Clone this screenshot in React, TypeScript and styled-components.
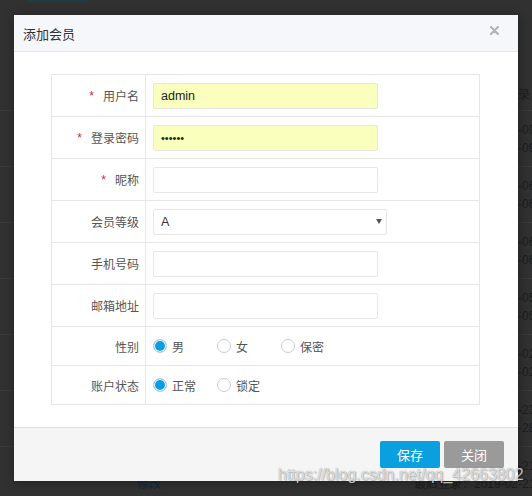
import React from "react";
import styled, { createGlobalStyle } from "styled-components";

const GlobalStyle = createGlobalStyle`
  html, body {
    margin: 0;
    padding: 0;
  }
  body {
    font-family: "Liberation Sans", "Noto Sans CJK SC", sans-serif;
  }
`;

const Screen = styled.div`
  position: relative;
  width: 532px;
  height: 496px;
  overflow: hidden;
  background: #313131;
`;

/* page behind the mask */
const NavMark = styled.div`
  width: 59px;
  height: 2px;
  margin-left: 28px;
  background: #1b3d43;
`;

const BgTable = styled.div`
  margin-top: 78px;
  font-size: 12px;
  color: #1d1d1d;
  white-space: nowrap;
`;

const BgRow = styled.div<{ $head?: boolean }>`
  display: grid;
  grid-template-columns: 137px 1fr 58px;
  align-items: center;
  height: ${props => (props.$head ? 31 : 56)}px;
  box-sizing: border-box;
  border-bottom: 1px solid #3b3b3b;
  overflow: hidden;
`;

const BgHeadCell = styled.div`
  padding-left: 8px;
  line-height: 18px;
`;

const BgCell = styled.div`
  display: flex;
  flex-direction: column;
  line-height: 18px;
`;

const BgLine = styled.span<{ $shift?: number }>`
  margin-left: ${props => -(props.$shift || 0)}px;
`;

const BgLink = styled.span`
  padding-top: 18px;
  line-height: 18px;
  color: #10263c;
`;

/* dialog */
const Dialog = styled.div`
  position: absolute;
  left: 14px;
  top: 15px;
  width: 504px;
  background: #fff;
  box-shadow: 1px 1px 10px rgba(0, 0, 0, 0.35);
`;

const Header = styled.div`
  position: relative;
  display: flex;
  align-items: center;
  height: 36px;
  padding-left: 9px;
  background: #f6f7fb;
  border-bottom: 1px solid #e6e6e6;
  font-size: 13px;
  color: #333;
`;

const Close = styled.span`
  position: absolute;
  right: 19px;
  top: 11px;
  display: flex;
  cursor: pointer;
`;

const Body = styled.div`
  padding: 22px 38px 22px 37px;
`;

const FormTable = styled.div`
  border: 1px solid #e6e6e6;
  border-bottom: none;
`;

const Row = styled.div<{ $compact?: boolean }>`
  display: flex;
  height: ${props => (props.$compact ? 39 : 42)}px;
  box-sizing: border-box;
  border-bottom: 1px solid #e6e6e6;
`;

const Label = styled.div`
  display: flex;
  align-items: center;
  justify-content: flex-end;
  width: 94px;
  box-sizing: border-box;
  padding-right: 6px;
  border-right: 1px solid #e6e6e6;
  font-size: 12px;
  color: #555;
`;

const Required = styled.span`
  margin-right: 9px;
  color: #e02828;
  font-family: "Liberation Sans", sans-serif;
`;

const Field = styled.div`
  display: flex;
  align-items: center;
  flex: 1;
  padding-left: 7px;
`;

const Input = styled.input<{ $filled?: boolean }>`
  width: 225px;
  height: 26px;
  box-sizing: border-box;
  padding: 0 7px;
  border: 1px solid #e6e6e6;
  border-radius: 2px;
  outline: none;
  background: ${props => (props.$filled ? "#faffbd" : "#fff")};
  font-family: "Liberation Sans", sans-serif;
  font-size: ${props => (props.type === "password" ? 11 : 12.5)}px;
  color: #222;
`;

const SelectBox = styled.div`
  position: relative;
  display: flex;
`;

const Select = styled.select`
  width: 234px;
  height: 26px;
  box-sizing: border-box;
  padding: 0 7px;
  border: 1px solid #e6e6e6;
  border-radius: 2px;
  outline: none;
  appearance: none;
  background: #fff;
  font-family: "Liberation Sans", sans-serif;
  font-size: 12.5px;
  color: #333;
`;

const Caret = styled.span`
  position: absolute;
  right: 5px;
  top: 50%;
  margin-top: -3px;
  border-left: 3px solid transparent;
  border-right: 3px solid transparent;
  border-top: 5px solid #555;
  pointer-events: none;
`;

const RadioGroup = styled.div`
  display: flex;
  align-items: center;
`;

const Option = styled.span`
  display: inline-flex;
  align-items: center;
  gap: 5px;
  min-width: 64px;
  font-size: 12px;
  color: #555;
  cursor: pointer;
`;

const Dot = styled.span<{ $on?: boolean }>`
  width: 14px;
  height: 14px;
  box-sizing: border-box;
  border-radius: 50%;
  border: 1px solid #c8ccd8;
  background: ${props => (props.$on ? "#0c9ee0" : "#fff")};
  box-shadow: ${props => (props.$on ? "inset 0 0 0 1px #fff" : "none")};
`;

const Footer = styled.div`
  display: flex;
  justify-content: flex-end;
  gap: 4px;
  padding: 13px 14px;
  background: #f5f5f5;
  border-top: 1px solid #dedede;
`;

const Button = styled.button<{ $tone: "primary" | "muted" }>`
  width: 60px;
  height: 27px;
  border: none;
  border-radius: 2px;
  background: ${props => (props.$tone === "primary" ? "#0aa0e0" : "#9a9a9a")};
  color: #fff;
  font-family: "Noto Sans CJK SC", sans-serif;
  font-size: 13px;
  cursor: pointer;
`;

const Watermark = styled.div`
  position: absolute;
  left: 278px;
  top: 467px;
  font-family: "Liberation Sans", sans-serif;
  font-size: 16px;
  line-height: 16px;
  color: rgba(255, 255, 255, 0.72);
  text-shadow: 0 0 1px rgba(0, 0, 0, 0.45), 1px 1px 1px rgba(0, 0, 0, 0.2);
  pointer-events: none;
  white-space: nowrap;
`;

const dates: [string, string][] = [
  ["2019-02-09", "2019-02-09"],
  ["2019-02-06", "2019-02-06"],
  ["2019-02-06", "2019-02-06"],
  ["2019-02-05", "2019-02-05"],
  ["2019-02-02", "2019-02-02"],
  ["2019-01-23", "2019-01-28"],
];

interface RadioProps {
  options: string[];
  value: string;
}

const Radios: React.FC<RadioProps> = ({ options, value }) => (
  <RadioGroup>
    {options.map(opt => (
      <Option key={opt}>
        <Dot $on={opt === value} />
        {opt}
      </Option>
    ))}
  </RadioGroup>
);

const App: React.FC = () => {
  return (
    <Screen>
      <GlobalStyle />
      <NavMark />
      <BgTable>
        <BgRow $head>
          <span />
          <span />
          <BgHeadCell>最后登录</BgHeadCell>
        </BgRow>
        {dates.map(([a, b], i) => (
          <BgRow key={i}>
            <span />
            <BgLink>修改</BgLink>
            <BgCell>
              <BgLine>{a}</BgLine>
              <BgLine>{b}</BgLine>
            </BgCell>
          </BgRow>
        ))}
        <BgRow>
          <span />
          <BgLink>修改</BgLink>
          <BgCell>
            <BgLine>2019-02-21</BgLine>
            <BgLine $shift={60}>最后登录：2019-02-21</BgLine>
          </BgCell>
        </BgRow>
      </BgTable>

      <Dialog>
        <Header>
          添加会员
          <Close>
            <svg width="9" height="9" viewBox="0 0 9 9">
              <path d="M1 1 L8 8 M8 1 L1 8" stroke="#b4b4b4" strokeWidth="2.2" strokeLinecap="round" />
            </svg>
          </Close>
        </Header>
        <Body>
          <FormTable>
            <Row>
              <Label><Required>*</Required>用户名</Label>
              <Field><Input defaultValue="admin" $filled readOnly /></Field>
            </Row>
            <Row>
              <Label><Required>*</Required>登录密码</Label>
              <Field><Input type="password" defaultValue="123456" $filled readOnly /></Field>
            </Row>
            <Row>
              <Label><Required>*</Required>昵称</Label>
              <Field><Input /></Field>
            </Row>
            <Row>
              <Label>会员等级</Label>
              <Field>
                <SelectBox>
                  <Select defaultValue="A">
                    <option value="A">A</option>
                    <option value="B">B</option>
                    <option value="C">C</option>
                  </Select>
                  <Caret />
                </SelectBox>
              </Field>
            </Row>
            <Row>
              <Label>手机号码</Label>
              <Field><Input /></Field>
            </Row>
            <Row>
              <Label>邮箱地址</Label>
              <Field><Input /></Field>
            </Row>
            <Row $compact>
              <Label>性别</Label>
              <Field><Radios options={["男", "女", "保密"]} value="男" /></Field>
            </Row>
            <Row $compact>
              <Label>账户状态</Label>
              <Field><Radios options={["正常", "锁定"]} value="正常" /></Field>
            </Row>
          </FormTable>
        </Body>
        <Footer>
          <Button $tone="primary">保存</Button>
          <Button $tone="muted">关闭</Button>
        </Footer>
      </Dialog>

      <Watermark>https://blog.csdn.net/qq_42663802</Watermark>
    </Screen>
  );
};

export default App;
